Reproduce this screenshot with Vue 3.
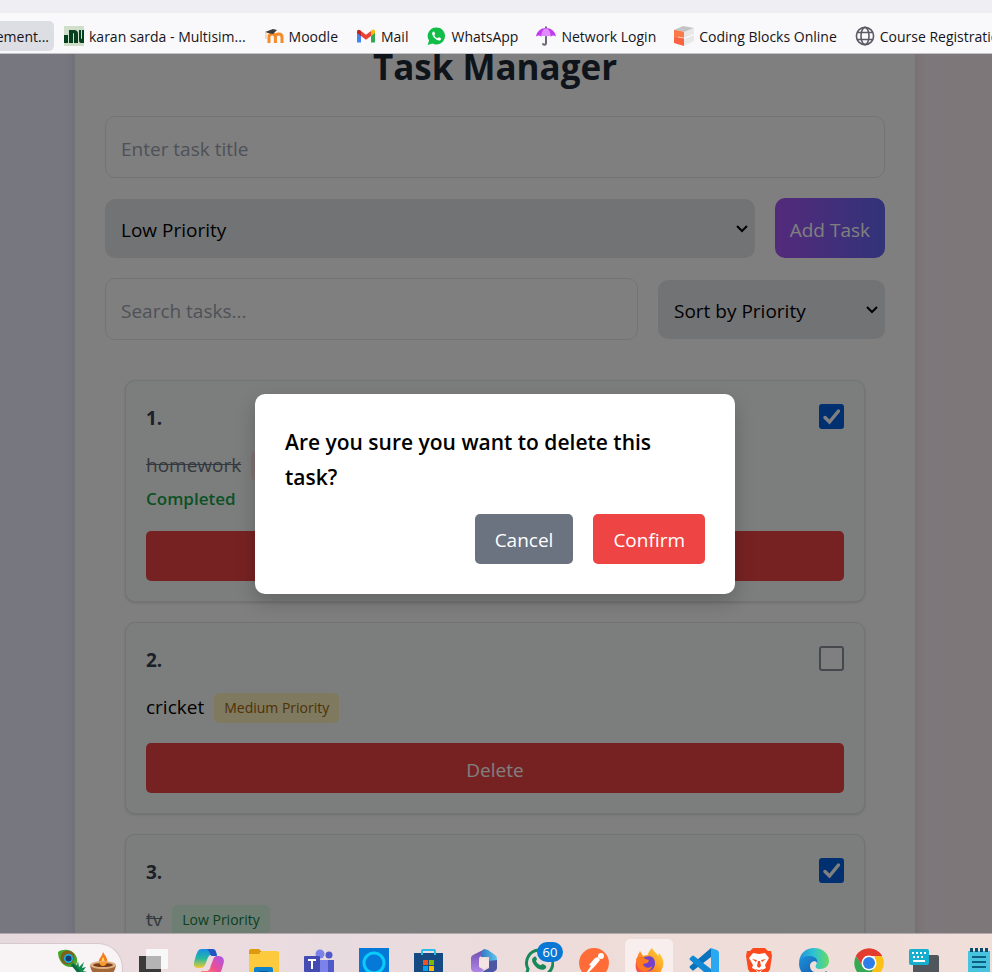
<script setup>
import { ref } from 'vue'

const bookmarks = [
  { icon: 'nu', label: 'karan sarda - Multisim...' },
  { icon: 'moodle', label: 'Moodle' },
  { icon: 'mail', label: 'Mail' },
  { icon: 'whatsapp', label: 'WhatsApp' },
  { icon: 'umbrella', label: 'Network Login' },
  { icon: 'blocks', label: 'Coding Blocks Online' },
  { icon: 'globe', label: 'Course Registration' }
]

const title = ref('')
const search = ref('')
const priority = ref('Low')
const sortBy = ref('priority')
const confirmOpen = ref(true)
const tasks = ref([
  { id: 1, text: 'homework', priority: 'High', done: true },
  { id: 2, text: 'cricket', priority: 'Medium', done: false },
  { id: 3, text: 'tv', priority: 'Low', done: true }
])
</script>

<template>
  <div class="screen">
    <header class="browser">
      <div class="tabstrip"></div>
      <nav class="bookmarks" aria-label="Bookmarks">
        <a class="bookmark current" href="#"><span>ement...</span></a>
        <a v-for="b in bookmarks" :key="b.icon" class="bookmark" href="#">
          <svg v-if="b.icon === 'nu'" viewBox="0 0 20 20">
            <rect width="20" height="20" fill="#cfdfcb" />
            <path d="M0 9h4v8H0zM5 4h5q4 0 4 4v9h-4V8q0-1-1-1v10H5zM15 4h2v8q0 1 1 1V4h2v13h-3q-2 0-2-3z" fill="#08401f" />
          </svg>
          <svg v-else-if="b.icon === 'moodle'" viewBox="0 0 20 20">
            <path d="M5 17v-6q0-3 3.200-3t3.200 3v6M11.400 17v-6q0-3 3.300-3t3.300 3v6" fill="none" stroke="#f58a2a" stroke-width="3" />
            <path d="M1 6l8-3 4 1-4 4-5-1z" fill="#3c3c3c" />
            <path d="M2 6v7" stroke="#f3b98c" stroke-width="1" />
          </svg>
          <svg v-else-if="b.icon === 'mail'" viewBox="0 0 20 20">
            <path d="M1 6v10.500h4V9z" fill="#4285f4" />
            <path d="M15 9v7.500h4V6z" fill="#34a853" />
            <path d="M15 5.500v4.500l4-3V5.500c0-2-2-2.600-3.300-1.500z" fill="#fbbc04" />
            <path d="M5 5v5l5 3.700 5-3.700V5l-5 3.700z" fill="#ea4335" />
            <path d="M1 5.500V7l4 3V5l-.8-.8C2.800 3 1 4 1 5.500z" fill="#c5221f" />
          </svg>
          <svg v-else-if="b.icon === 'whatsapp'" viewBox="0 0 20 20">
            <path d="M10.500 1.500a8.500 8.500 0 1 1-4 16L1.700 19 3 14.500a8.500 8.500 0 0 1 7.500-13z" fill="#10bd48" />
            <path d="M7.500 5.500c-2.500 1-1 4.500 1 6.500s5.500 3.700 6.500 1.200c.3-1-.3-1.200-2-2-.8-.3-1 .9-1.600 1-1.300-.3-2.700-1.700-3.100-3 .1-.6 1-.9.800-1.500-.4-1.200-.7-2.200-1.600-2.200z" fill="#fff" />
          </svg>
          <svg v-else-if="b.icon === 'umbrella'" viewBox="0 0 20 20">
            <path d="M10 .5v16q0 2.300-1.500 2.300t-1.500-1.500" fill="none" stroke="#6d6572" stroke-width="2" />
            <path d="M0 10.500C1 5 5 2 10 2s9 3 10 8.500c-2-1.500-4-1.300-5 0-2-1.500-3-1.500-5 0-2-1.500-3-1.500-5 0-1-1.300-3-1.500-5 0z" fill="#c23af0" />
            <path d="M5 10.500C5.500 6 7 3 10 2.200 13 3 14.500 6 15 10.500c-2-1.500-3-1.500-5 0-2-1.500-3-1.500-5 0z" fill="#e08cff" />
          </svg>
          <svg v-else-if="b.icon === 'blocks'" viewBox="0 0 20 20">
            <path d="M0 4l9-4 11 2-9 4z" fill="#c4c4c4" />
            <path d="M10 6l10-4v13l-10 5z" fill="#e8e8e8" />
            <path d="M10 12.500l10-4" stroke="#fff" stroke-width="1" />
            <path d="M0 4l10 2v14L0 17z" fill="#f9633f" />
            <path d="M0 4l10 2v5L0 12z" fill="#fb7a48" />
            <path d="M4 11l6 1" stroke="#ffd0c2" stroke-width="1" />
          </svg>
          <svg v-else viewBox="0 0 20 20" fill="none" stroke="#5b5b66" stroke-width="1.600">
            <circle cx="10" cy="10" r="8.600" />
            <ellipse cx="10" cy="10" rx="4" ry="8.600" />
            <path d="M2.500 6.500h15M2.500 13.500h15" />
          </svg>
          <span>{{ b.label }}</span>
        </a>
      </nav>
    </header>

    <div class="viewport">
      <main class="card">
        <h1>Task Manager</h1>
        <input v-model="title" class="field" type="text" placeholder="Enter task title" aria-label="Task title" />
        <div class="row">
          <div class="picker grow">
            <select v-model="priority" aria-label="Priority">
              <option value="Low">Low Priority</option>
              <option value="Medium">Medium Priority</option>
              <option value="High">High Priority</option>
            </select>
            <svg class="chevron" viewBox="0 0 12 8"><path d="M1 1l5 5 5-5" /></svg>
          </div>
          <button class="add" type="button">Add Task</button>
        </div>
        <div class="row">
          <input v-model="search" class="field grow" type="text" placeholder="Search tasks..." aria-label="Search tasks" />
          <div class="picker sort">
            <select v-model="sortBy" aria-label="Sort">
              <option value="priority">Sort by Priority</option>
              <option value="title">Sort by Title</option>
            </select>
            <svg class="chevron" viewBox="0 0 12 8"><path d="M1 1l5 5 5-5" /></svg>
          </div>
        </div>

        <ul class="tasks">
          <li v-for="(t, i) in tasks" :key="t.id" class="task">
            <div class="task-head">
              <span class="number">{{ i + 1 }}.</span>
              <input v-model="t.done" type="checkbox" :aria-label="t.text" />
            </div>
            <div class="task-body">
              <div class="task-line">
                <span class="name" :class="{ struck: t.done }">{{ t.text }}</span>
                <span class="badge" :class="t.priority.toLowerCase()">{{ t.priority }} Priority</span>
              </div>
              <div v-if="t.done" class="completed">Completed</div>
            </div>
            <button class="delete" type="button" @click="confirmOpen = true">Delete</button>
          </li>
        </ul>
      </main>

      <div v-if="confirmOpen" class="overlay">
        <div class="modal" role="dialog" aria-modal="true" aria-labelledby="ask">
          <h2 id="ask">Are you sure you want to delete this task?</h2>
          <div class="actions">
            <button class="cancel" type="button" @click="confirmOpen = false">Cancel</button>
            <button class="confirm" type="button" @click="confirmOpen = false">Confirm</button>
          </div>
        </div>
      </div>
    </div>

    <footer class="taskbar">
      <div class="search-pill">
        <svg viewBox="0 0 30 30">
          <path d="M17 14l3 2 1-4 1 6 5-5-2 6 4-1-3 4 4 1-4 3 2 4h-6z" fill="#128a50" />
          <path d="M1 3C6-1 16 0 19 7c3 5 0 10-4 11C8 19 1 13 1 3z" fill="#42a72c" />
          <ellipse cx="10.500" cy="8.500" rx="7" ry="7" fill="#80601a" />
          <circle cx="11.500" cy="9.500" r="4.500" fill="#12b7e9" />
          <circle cx="11.500" cy="9.500" r="3" fill="#123a6f" />
          <path d="M15 15l12 14" stroke="#0b6b42" stroke-width="3" />
        </svg>
        <svg viewBox="0 0 30 30">
          <path d="M15 3c3 5 5 7 4 10-1 4-7 4-8 0-1-3 3-5 4-10z" fill="#f47b20" />
          <path d="M15 8c2 3 2 6 0 7-2-1-2-4 0-7z" fill="#ffd25a" />
          <path d="M2 16c1 8 6 12 13 12s12-4 13-12c-6 4-20 4-26 0z" fill="#a3683a" />
          <ellipse cx="15" cy="16" rx="13" ry="4" fill="#e0b184" />
          <ellipse cx="15" cy="16" rx="10" ry="2" fill="#7a3d17" />
          <path d="M11 13h8q-1 4-4 4t-4-4z" fill="#f79a30" />
        </svg>
      </div>
      <div class="apps">
        <svg viewBox="0 0 30 30">
          <rect x="0" y="8" width="22" height="22" fill="#3a3a3a" />
          <rect x="7" y="1" width="22" height="20" rx="1" fill="#f8f8f8" />
          <path d="M7 8h15v13H7z" fill="#b4b4b4" />
        </svg>
        <svg viewBox="0 0 30 30">
          <defs>
            <linearGradient id="cpA" x1="0" y1="0" x2="0" y2="1"><stop offset="0" stop-color="#158de8" /><stop offset=".5" stop-color="#27b9a0" /><stop offset="1" stop-color="#f4cb2c" /></linearGradient>
            <linearGradient id="cpB" x1="1" y1="0" x2="0" y2="1"><stop offset="0" stop-color="#a856ef" /><stop offset=".5" stop-color="#ed4f92" /><stop offset="1" stop-color="#ff9b54" /></linearGradient>
          </defs>
          <path d="M8 1h11c3 0 3 3 4 6h-6c-2 0-3 2-4 5l-2 5c-1 2-2 3-5 3-7 0-7-3-5-9C3 4 4 1 8 1z" fill="url(#cpA)" />
          <path d="M17 1c4 0 5 2 6 7h-5c-2 0-2-5-5-7z" fill="#2453c4" />
          <path d="M23 8c7 0 8 4 6 9-2 8-4 12-9 12H11c-2 0-3-3-4-6h5c3 0 4-2 5-6l2-5c1-3 2-4 4-4z" fill="url(#cpB)" />
        </svg>
        <svg viewBox="0 0 30 30">
          <path d="M0 3q0-2 2-2h8l3 3h-2v6H0z" fill="#dc9a0c" />
          <path d="M0 6h10l3-3h15q2 0 2 2v23H0z" fill="#fdca3d" />
          <path d="M5 30V21q0-2 2-2h15q2 0 2 2v9z" fill="#0f82cc" />
          <path d="M10 24h9" stroke="#075a96" stroke-width="2" />
        </svg>
        <svg viewBox="0 0 30 30">
          <circle cx="16" cy="6" r="4.500" fill="#7b83eb" />
          <circle cx="25" cy="7" r="3.500" fill="#5059c9" />
          <path d="M20 12h10v11q-1 6-7 6z" fill="#5059c9" />
          <path d="M8 12h16v12q-1 6-8 6t-8-6z" fill="#7b83eb" />
          <rect x="0" y="8" width="16" height="16" rx="1" fill="#444cb4" />
          <path d="M4 12h8M8 12v9" stroke="#fff" stroke-width="2" />
        </svg>
        <svg viewBox="0 0 30 30">
          <rect width="30" height="30" fill="#0678d8" />
          <circle cx="15" cy="15" r="10" fill="none" stroke="#08cbfa" stroke-width="3" />
        </svg>
        <svg viewBox="0 0 30 30">
          <path d="M8 7V3q0-1 1-1h11q1 0 1 1v4" fill="none" stroke="#27bce9" stroke-width="2" />
          <path d="M0 5h29v22q0 3-3 3H3q-3 0-3-3z" fill="#154a82" />
          <path d="M9 12h5v5H9z" fill="#f25022" /><path d="M15 12h5v5h-5z" fill="#7fba00" />
          <path d="M9 18h5v5H9z" fill="#00a4ef" /><path d="M15 18h5v5h-5z" fill="#ffb900" />
          <path d="M8 5v2M21 5v2" stroke="#27bce9" stroke-width="2" />
        </svg>
        <svg viewBox="0 0 30 30">
          <defs>
            <linearGradient id="moA" x1="0" y1="0" x2="0" y2="1"><stop offset="0" stop-color="#6d4bb0" /><stop offset="1" stop-color="#b68bea" /></linearGradient>
            <linearGradient id="moB"><stop offset="0" stop-color="#2f78c0" /><stop offset="1" stop-color="#5fc4ec" /></linearGradient>
          </defs>
          <path d="M16 1L4 7q-2 1-2 3v10q0 3 3 4l4 2 6-4-5-3v-8q0-2 2-3l5-3z" fill="url(#moA)" />
          <path d="M15 1l4 1 7 5q2 1 2 4v8l-8-6V9l-8 0q-1-4 3-8z" fill="url(#moB)" />
          <path d="M28 12v8q0 2-2 3l-9 5q-2 1-4 0l-5-3q3 1 5-1l7-4v-7z" fill="#4d55a5" />
          <path d="M15 10l5 3v5l-5 3-5-3v-5z" fill="#f4e5e4" />
        </svg>
        <div class="with-badge">
          <svg viewBox="0 0 30 30">
            <path d="M15 2a13 13 0 1 1-6 24l-7 2 2-7A13 13 0 0 1 15 2z" fill="none" stroke="#16885a" stroke-width="3" />
            <path d="M10 9c-4 2-1 7 2 10s8 4 10 1c1-2-1-3-3-4-2 0-2 2-3 1-2-1-3-2-4-4 0-1 1-1 1-2-1-2-1-3-3-2z" fill="#16885a" />
          </svg>
          <span class="count">60</span>
        </div>
        <svg viewBox="0 0 30 30">
          <circle cx="15" cy="15" r="15" fill="#ff6c37" />
          <circle cx="22" cy="8" r="3" fill="#fff" />
          <path d="M19 9l2 3-5 6-6 6-3 1 5-7-2-1 6-7z" fill="#fff" />
        </svg>
        <div class="active-app">
          <svg viewBox="0 0 30 30">
            <defs><linearGradient id="fx" x1="1" y1="0" x2="0" y2="1"><stop offset="0" stop-color="#ffe03b" /><stop offset=".5" stop-color="#ff9322" /><stop offset="1" stop-color="#f52c57" /></linearGradient></defs>
            <path d="M18 0c2 4 5 5 6 8l1-3c4 4 5 9 4 13-2 8-7 12-14 12C6 30 0 23 2 14L4 7l2-4 3 5c2-1 4-1 5-1 0-3 2-5 4-7z" fill="url(#fx)" />
            <path d="M9 10c4-3 12-3 12 5 0 5-3 8-7 8s-7-3-7-7l6-1 2-2z" fill="#7541c8" />
            <path d="M2 11c2-3 7-3 9 0l4 1-3 3-3 1c1 4 6 5 9 2 0 5-10 8-14 1z" fill="#ff7b22" />
          </svg>
        </div>
        <svg viewBox="0 0 30 30">
          <path d="M22 0v9L5 22q-1 1-2 0l-2-2q-1-1 0-2z" fill="#0872bd" />
          <path d="M22 30v-9L5 8Q4 7 3 8l-2 2q-1 1 0 2z" fill="#1088d4" />
          <path d="M22 0l6 2q2 1 2 3v20q0 2-2 3l-6 2z" fill="#2aa9f2" />
        </svg>
        <svg viewBox="0 0 30 30">
          <path d="M9 0h12l3 3h3l1 5-2 13q-2 5-11 9Q6 26 4 21L2 8l1-5h3z" fill="#fb4a1e" />
          <path d="M9 5l6 1 6-1 4 5-4 7 1 3-4 2-3 5-3-5-4-2 1-3-4-7z" fill="#fff" />
          <path d="M8 11l5 1-1 2zM22 11l-5 1 1 2zM14 13h2l1 5-2 2-2-2zM11 21l4 1 4-1-4 3z" fill="#fb4a1e" />
        </svg>
        <svg viewBox="0 0 30 30">
          <defs>
            <linearGradient id="edA"><stop offset="0" stop-color="#2191dd" /><stop offset=".5" stop-color="#2fc3d1" /><stop offset="1" stop-color="#65dc61" /></linearGradient>
            <linearGradient id="edB" x1="0" y1="0" x2="1" y2="1"><stop offset="0" stop-color="#1d92df" /><stop offset="1" stop-color="#124d97" /></linearGradient>
          </defs>
          <path d="M0 14C1 5 7 0 15 0c9 0 15 6 15 13 0 5-4 8-9 8-4 0-5-2-4-4 3-5-2-8-7-8-5 0-8 3-10 5z" fill="url(#edA)" />
          <path d="M0 15C1 10 6 8 10 8c6 0 9 3 8 7-1-3-7-2-7 3 0 7 9 9 17 5-3 5-7 7-13 7C6 30 0 24 0 15z" fill="url(#edB)" />
        </svg>
        <svg viewBox="0 0 30 30">
          <path d="M2 8a15 15 0 0 1 26 0H15z" fill="#e33b2e" />
          <path d="M2 8a15 15 0 0 0 12 22l7-11-6 3-6-3z" fill="#34a853" />
          <path d="M28 8a15 15 0 0 1-14 22l7-11V8z" fill="#fbc116" />
          <path d="M2 8l7 11 2-11h17A15 15 0 0 0 2 8z" fill="#e33b2e" />
          <circle cx="15" cy="15" r="7.500" fill="#fff" />
          <circle cx="15" cy="15" r="6" fill="#2f7de9" />
        </svg>
        <svg viewBox="0 0 30 30">
          <path d="M10 7h18q2 0 2 2v21H4V16z" fill="#51565c" />
          <rect x="0" y="1" width="20" height="16" rx="2" fill="#16afd0" />
          <path d="M3 5h14M4 9h12" stroke="#fff" stroke-width="2" stroke-dasharray="2 2" />
          <path d="M4 13h12" stroke="#fff" stroke-width="2" />
        </svg>
        <svg viewBox="0 0 30 30">
          <path d="M4 3h22v27H4z" fill="#48c3df" />
          <path d="M6 2h20" stroke="#0b4c6d" stroke-width="4" stroke-dasharray="3 2" />
          <path d="M8 9h14M8 14h14M8 19h14" stroke="#0b607f" stroke-width="2" />
        </svg>
      </div>
    </footer>
  </div>
</template>

<style>
body {
  margin: 0;
  overflow: hidden;
}
</style>

<style scoped>
* {
  box-sizing: border-box;
}
.screen {
  display: flex;
  flex-direction: column;
  height: 100vh;
  overflow: hidden;
  font-family: "Open Sans", "Noto Sans", sans-serif;
  font-size: 19px;
  line-height: 30px;
  color: #000;
}
button,
input,
select {
  font: inherit;
  margin: 0;
}
button {
  border: 0;
  cursor: pointer;
}

.browser {
  flex: none;
  background: #f9f9fb;
  border-bottom: 1px solid #c4c4c8;
}
.tabstrip {
  height: 13px;
  background: #efeef3;
}
.bookmarks {
  display: flex;
  gap: 8px;
  padding: 8px 0 2px;
  overflow: hidden;
}
.bookmark {
  display: flex;
  flex: none;
  align-items: center;
  gap: 5px;
  height: 30px;
  padding: 0 5px;
  border-radius: 5px;
  color: #15141a;
  font-size: 14px;
  text-decoration: none;
  white-space: nowrap;
}
.bookmark span {
  padding-top: 2px;
  line-height: 28px;
}
.bookmark svg {
  width: 20px;
  height: 20px;
}
.bookmark.current {
  justify-content: flex-end;
  width: 54px;
  margin-right: -3px;
  background: #dddee3;
  border-radius: 0 5px 5px 0;
}

.viewport {
  position: relative;
  display: flex;
  flex: 1;
  align-items: flex-start;
  justify-content: center;
  min-height: 0;
  padding: 0 2px 0 0;
  overflow: hidden;
  background: linear-gradient(to right, #eeeeff, #f6effa, #fdeff5);
}
.card {
  width: 100%;
  max-width: 840px;
  margin-top: -40px;
  padding: 30px;
  background: #fff;
  box-shadow: 0 5px 12px rgba(0, 0, 0, 0.1);
}
h1 {
  margin: 0 0 28px;
  padding-top: 2px;
  color: #1f2937;
  font-size: 35px;
  font-weight: 700;
  line-height: 42px;
  text-align: center;
}
.field {
  display: block;
  width: 100%;
  height: 62px;
  padding: 4px 15px 0;
  border: 1px solid #e5e7eb;
  border-radius: 10px;
  background: #fff;
  color: #000;
}
.field::placeholder {
  color: #9ca3af;
  opacity: 1;
}
.row {
  display: flex;
  align-items: center;
  gap: 20px;
  margin-top: 20px;
}
.grow {
  flex: 1;
  min-width: 0;
}
.picker {
  position: relative;
}
.sort {
  width: 227px;
}
select {
  display: block;
  width: 100%;
  height: 59px;
  padding: 4px 30px 0 16px;
  border: 0;
  border-radius: 10px;
  background: #e5e7eb;
  color: #000;
  appearance: none;
}
.chevron {
  position: absolute;
  right: 7px;
  top: 26px;
  width: 12px;
  height: 8px;
  fill: none;
  stroke: #000;
  stroke-width: 2;
  pointer-events: none;
}
.add {
  height: 60px;
  padding: 4px 15px 0;
  border-radius: 10px;
  background: linear-gradient(to right, #a855f7, #6366f1);
  color: #fff;
}

.tasks {
  display: flex;
  flex-direction: column;
  gap: 20px;
  margin: 40px 0 0;
  padding: 0 20px;
  list-style: none;
}
.task {
  display: flex;
  flex-direction: column;
  gap: 20px;
  padding: 20px;
  border: 1px solid #e5e7eb;
  border-radius: 10px;
  background: #f8fdfb;
  box-shadow: 0 1px 3px rgba(0, 0, 0, 0.15);
}
.task-head {
  display: flex;
  align-items: center;
  justify-content: space-between;
  height: 30px;
}
.number {
  padding-top: 4px;
  color: #374151;
  font-weight: 700;
}
input[type="checkbox"] {
  width: 25px;
  height: 25px;
  border: 2px solid #8f8f9d;
  border-radius: 3px;
  background: #fff;
  appearance: none;
}
input[type="checkbox"]:checked {
  border-color: #0060df;
  background: #0060df url("data:image/svg+xml,%3Csvg xmlns='http://www.w3.org/2000/svg' viewBox='0 0 21 21'%3E%3Cpath d='M4 11.500l4.500 4.500L17.500 5' fill='none' stroke='white' stroke-width='3.500' stroke-linecap='round'/%3E%3C/svg%3E") center / 21px no-repeat;
}
.task-line {
  display: flex;
  align-items: center;
  gap: 10px;
  height: 30px;
}
.name {
  padding-bottom: 2px;
}
.struck {
  color: #6b7280;
  text-decoration: line-through;
}
.badge {
  padding: 0 10px;
  border-radius: 5px;
  font-size: 14px;
}
.badge.high {
  background: #fee2e2;
  color: #b91c1c;
}
.badge.medium {
  background: #fef3c0;
  color: #a16207;
}
.badge.low {
  background: #dcfce7;
  color: #15803d;
}
.completed {
  padding-top: 6px;
  color: #16a34a;
  font-size: 17px;
  font-weight: 600;
  line-height: 24px;
}
.delete {
  height: 50px;
  padding: 4px 20px 0;
  border-radius: 5px;
  background: #ef4444;
  color: #fff;
}

.overlay {
  position: absolute;
  inset: 0;
  display: flex;
  align-items: center;
  justify-content: center;
  padding-right: 2px;
  background: rgba(0, 0, 0, 0.5);
}
.modal {
  width: 100%;
  max-width: 480px;
  padding: 30px;
  border-radius: 10px;
  background: #fff;
  box-shadow: 0 8px 20px rgba(0, 0, 0, 0.2);
}
h2 {
  margin: 0;
  padding: 1px 0 19px;
  font-size: 21px;
  font-weight: 600;
  line-height: 35px;
}
.actions {
  display: flex;
  justify-content: flex-end;
  gap: 20px;
}
.actions button {
  height: 50px;
  padding: 2px 20px 0;
  border-radius: 5px;
  color: #fff;
}
.cancel {
  background: #6b7280;
}
.confirm {
  background: #ef4444;
}

.taskbar {
  display: flex;
  flex: none;
  gap: 16px;
  height: 39px;
  overflow: hidden;
  border-top: 1px solid #b0a9ad;
  background: linear-gradient(to right, #e6d9de, #eddcde 20%, #e8dbe0 33%, #eedcd9 60%, #f0ded9);
}
.search-pill {
  display: flex;
  flex: none;
  justify-content: flex-end;
  gap: 1px;
  width: 123px;
  height: 50px;
  margin-top: 9px;
  padding: 5px 4px 0 0;
  border: 1px solid #d5c8ce;
  border-left: 0;
  border-radius: 0 25px 25px 0;
  background: #f8f4f6;
}
.apps {
  display: flex;
  flex: none;
  gap: 25px;
  padding-top: 14px;
}
.taskbar svg {
  display: block;
  flex: none;
  width: 30px;
  height: 30px;
}
.with-badge {
  position: relative;
}
.count {
  position: absolute;
  left: 13px;
  top: -6px;
  width: 26px;
  height: 20px;
  border-radius: 10px;
  background: #0878d4;
  color: #fff;
  font-size: 13px;
  line-height: 20px;
  text-align: center;
}
.active-app {
  height: 50px;
  margin: -9px;
  padding: 9px;
  border-radius: 5px;
  background: #f8eeee;
}
</style>
